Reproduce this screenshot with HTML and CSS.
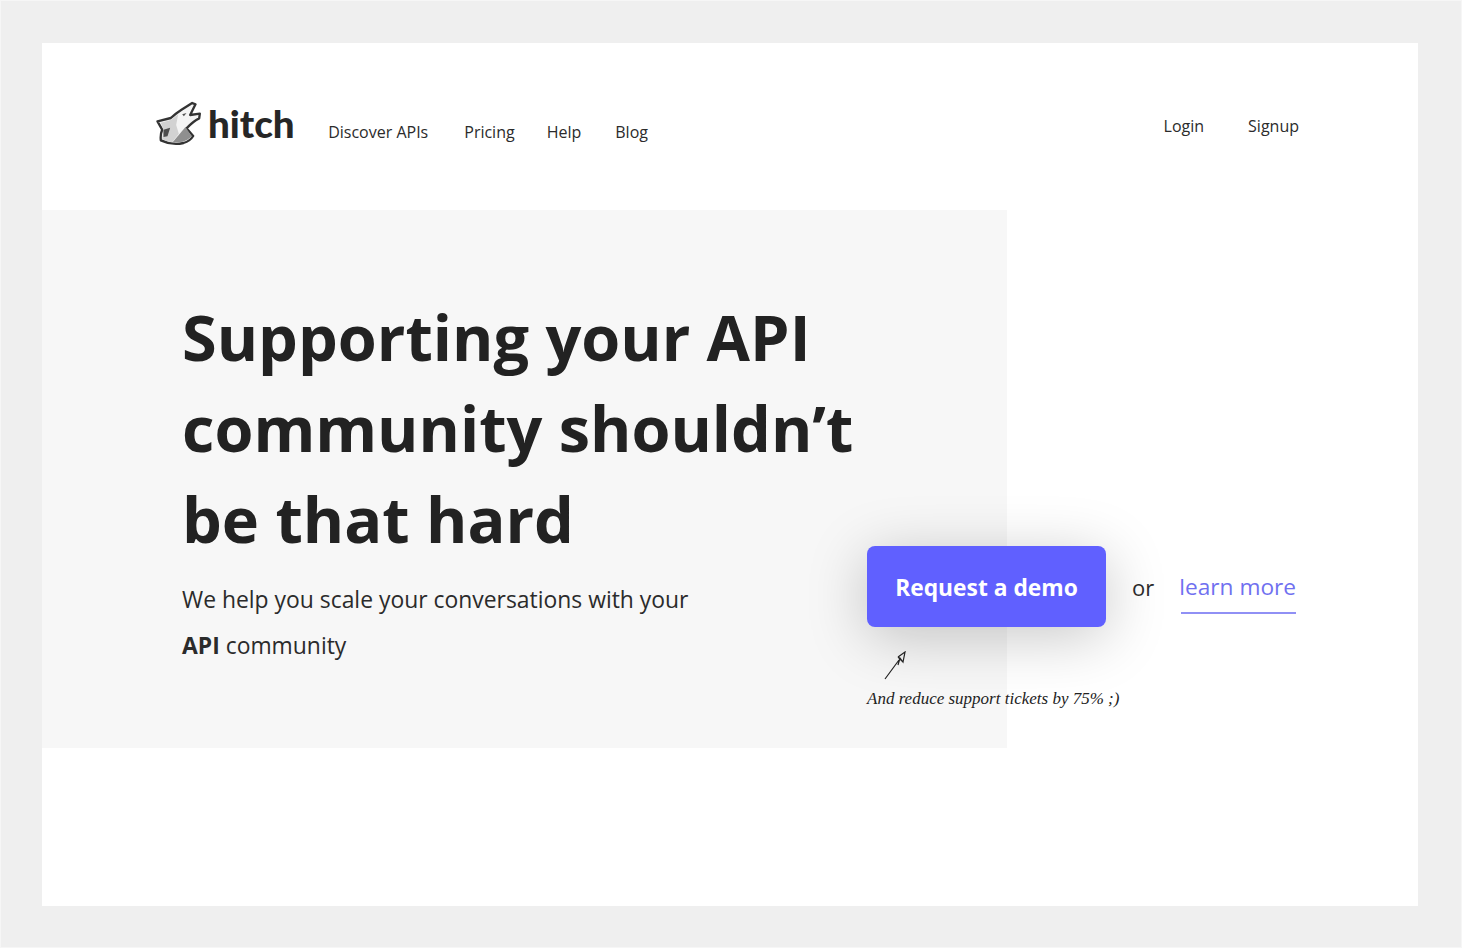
FILE: index.html
```html
<!DOCTYPE html>
<html lang="en">
<head>
    <meta charset="UTF-8">
    <title>Hitch</title>
    <link rel="stylesheet" href="styles.css">
</head>
<body>
    <div class="frame">
        <header class="topbar">
            <a class="logo" href="#">
                <svg class="wolf" viewBox="45 48 140 135" width="47" height="45">
                    <path fill="#f4f4f4" stroke="#333" stroke-width="7" stroke-linejoin="round" d="M52 109 L92 99 Q108 84 124 74 L156 54 L166 58 L150 90 L179 86 L177 100 Q160 108 139 130 L159 153 Q150 168 130 174 Q96 182 62 166 Q60 148 66 134 Z"/>
                    <path fill="#d2d2d2" d="M62 113 L92 105 L114 88 L108 120 L116 146 L96 172 Q78 170 66 162 L70 134 Z"/>
                    <path fill="#8f8f8f" d="M136 126 L154 153 Q146 164 128 170 L96 173 Z"/>
                    <path fill="#4d4d4d" d="M70 134 L90 128 L82 154 L70 156 Z"/>
                    <path fill="#555" d="M126 88 L139 84 L131 94 Z"/>
                </svg>
                <span class="logo-text">hitch</span>
            </a>
            <nav class="main-nav">
                <a href="#">Discover APIs</a>
                <a class="pricing" href="#">Pricing</a>
                <a class="help" href="#">Help</a>
                <a href="#">Blog</a>
            </nav>
            <nav class="user-nav">
                <a href="#">Login</a>
                <a href="#">Signup</a>
            </nav>
        </header>
        <section class="hero">
            <div class="hero-panel">
                <h1>Supporting your API community shouldn’t be that hard</h1>
                <p>We help you scale your conversations with your <strong>API</strong> community</p>
            </div>
            <div class="cta">
                <div class="cta-row">
                    <button class="demo-btn">Request a demo</button>
                    <span class="or">or</span>
                    <a class="learn" href="#">learn more</a>
                </div>
                <svg class="arrow" viewBox="0 0 24 30" width="24" height="30">
                    <path fill="none" stroke="#222" stroke-width="1.2" d="M1 28 L15 9 M14 6 L21 1 L19 11 L16 7 L14 14 M14 6 L19 11"/>
                </svg>
                <div class="note">And reduce support tickets by 75% ;)</div>
            </div>
        </section>
    </div>
</body>
</html>
```

FILE: styles.css
```css
body {
    margin: 0;
    height: 948px;
    box-sizing: border-box;
    overflow: hidden;
    border: 1px solid #f6f6f6;
    background-color: #efefef;
    font-family: "Open Sans", sans-serif;
    color: #2b2b2b;
}
a {
    color: inherit;
    text-decoration: none;
}
.frame {
    margin: 42px 43px 41px 41px;
    height: 863px;
    background: white;
}
.topbar {
    display: flex;
    align-items: flex-start;
    height: 167px;
    padding: 58px 119px 0 113px;
    box-sizing: border-box;
}
.logo {
    display: flex;
    align-items: center;
    gap: 6px;
}
.wolf {
    display: block;
}
.logo-text {
    font-family: Lato, sans-serif;
    font-weight: 900;
    font-size: 38.5px;
    line-height: 44px;
    margin-top: -2px;
    color: #262626;
}
.main-nav {
    display: flex;
    gap: 32px;
    margin-left: 33.5px;
    padding-top: 20px;
    font-size: 16px;
}
.pricing {
    margin-left: 4px;
}
.help {
    margin-right: 2px;
}
.user-nav {
    display: flex;
    gap: 44px;
    margin-left: auto;
    padding-top: 14px;
    font-size: 16px;
}
.hero {
    display: flex;
}
.hero-panel {
    width: 965px;
    height: 538px;
    box-sizing: border-box;
    flex-shrink: 0;
    padding: 81px 120px 0 140px;
    background-color: #f7f7f7;
}
h1 {
    margin: 0;
    font-size: 63px;
    line-height: 91px;
    font-weight: 700;
    color: #222;
}
.hero-panel p {
    margin: 13px 0 0;
    width: 540px;
    font-size: 22.9px;
    line-height: 46px;
}
.cta {
    margin-left: -140px;
    padding-top: 336px;
}
.cta-row {
    display: flex;
    align-items: center;
}
.demo-btn {
    width: 239px;
    height: 81px;
    border: none;
    border-radius: 8px;
    padding: 2px 0 0;
    background-color: #6060ff;
    color: white;
    font-family: "Open Sans", sans-serif;
    font-weight: 700;
    font-size: 22.8px;
    box-shadow: 0 10px 60px rgba(0, 0, 0, 0.22);
}
.or {
    margin-left: 26px;
    font-size: 22px;
}
.learn {
    position: relative;
    margin-left: 25px;
    color: #7070f0;
    font-size: 22.7px;
    line-height: 32px;
    padding-bottom: 11px;
    margin-top: 11px;
}
.learn::after {
    content: "";
    position: absolute;
    left: 2px;
    right: 0;
    bottom: 0;
    height: 2px;
    background-color: #9090f5;
}
.arrow {
    display: block;
    margin: 24px 0 0 17px;
}
.note {
    margin-top: 8px;
    font-family: "Liberation Serif", serif;
    font-style: italic;
    font-size: 17px;
    color: #222;
    white-space: nowrap;
}
```
